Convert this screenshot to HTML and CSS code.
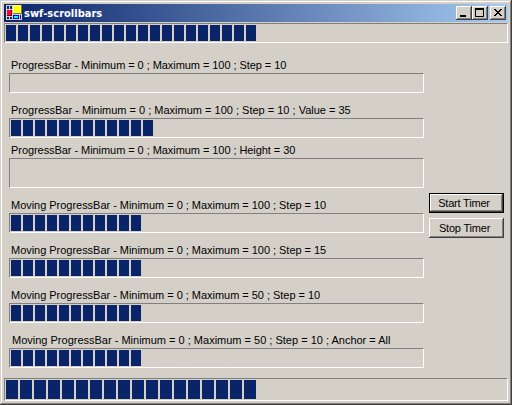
FILE: index.html
```html
<!DOCTYPE html>
<html lang="en">
<head>
<meta charset="utf-8">
<title>swf-scrollbars</title>
<link rel="stylesheet" href="styles.css">
</head>
<body>
<div class="window">
  <header class="titlebar">
    <svg class="app-icon" width="16" height="16" viewBox="0 0 16 16" shape-rendering="crispEdges">
      <path fill="#d4d0c8" d="M0 0h16v15H0z"/>
      <path fill="#0a246a" d="M1 1h2v3H1zM4 1h2v3H4zM1 12h2v2H1zM4 12h2v2H4zM14 10h1v4h-1z"/>
      <path fill="#800000" d="M1 5h5v6H1z"/><path fill="#ff0040" d="M1 5h4v5H1z"/>
      <path fill="#808000" d="M7 0h9v9H7z"/><path fill="#ffff80" d="M7 0h8v8H7z"/><path fill="#ffff00" d="M8 1h6v6H8z"/>
      <path fill="#0000ff" d="M7 10h6v4H7z"/><path fill="#00ffff" d="M8 11h4v2H8z"/>
    </svg>
    <h1 class="title"><span class="title-text">swf-scrollbars</span></h1>
    <div class="controls">
      <button class="control" aria-label="Minimize"><svg width="16" height="14" shape-rendering="crispEdges"><path d="M4 9h6v2H4z"/></svg></button>
      <button class="control" aria-label="Maximize"><svg width="16" height="14" shape-rendering="crispEdges"><path fill-rule="evenodd" d="M3 2h9v9H3zM4 4v6h7V4z"/></svg></button>
      <button class="control close" aria-label="Close"><svg width="16" height="14" shape-rendering="crispEdges"><path d="M4 3h2v1H4zM10 3h2v1h-2zM5 4h2v1H5zM9 4h2v1H9zM6 5h4v1H6zM7 6h2v1H7zM6 7h4v1H6zM5 8h2v1H5zM9 8h2v1H9zM4 9h2v1H4zM10 9h2v1h-2z"/></svg></button>
    </div>
  </header>
  <div class="bar"><div class="fill" style="width:250px"></div></div>
  <main class="content">
    <div class="fields">
      <div class="field"><label><span class="tight">ProgressBar - Minimum = 0 ; Maximum = 100 ; Step = 10</span></label><div class="bar"></div></div>
      <div class="field"><label>ProgressBar - Minimum = 0 ; Maximum = 100 ; Step = 10 ; Value = 35</label><div class="bar"><div class="fill" style="width:142px"></div></div></div>
      <div class="field close-up"><label><span class="tight">ProgressBar - Minimum = 0 ; Maximum = 100 ; Height = 30</span></label><div class="bar tall"></div></div>
      <div class="field"><label><span class="snug">Moving ProgressBar - Minimum = 0 ; Maximum = 100 ; Step = 10</span></label><div class="bar"><div class="fill" style="width:130px"></div></div></div>
      <div class="field"><label><span class="snug">Moving ProgressBar - Minimum = 0 ; Maximum = 100 ; Step = 15</span></label><div class="bar"><div class="fill" style="width:130px"></div></div></div>
      <div class="field"><label><span class="snug">Moving ProgressBar - Minimum = 0 ; Maximum = 50 ; Step = 10</span></label><div class="bar"><div class="fill" style="width:130px"></div></div></div>
      <div class="field"><label class="indent">Moving ProgressBar - Minimum = 0 ; Maximum = 50 ; Step = 10 ; Anchor = All</label><div class="bar"><div class="fill" style="width:130px"></div></div></div>
    </div>
    <div class="actions">
      <button class="btn default">Start Timer</button>
      <button class="btn">Stop Timer</button>
    </div>
  </main>
  <div class="bar bottom"><div class="fill wide" style="width:250px"></div></div>
</div>
</body>
</html>
```
FILE: styles.css
```css
* { box-sizing: border-box; }
body { margin: 0; overflow: hidden; }
.window {
  width: 512px;
  height: 405px;
  padding: 4px;
  display: flex;
  flex-direction: column;
  background: #d4d0c8;
  color: #000;
  font: 11px/15px "Liberation Sans", Arial, sans-serif;
  box-shadow: inset -1px -1px #404040, inset 1px 1px #d4d0c8, inset -2px -2px #808080, inset 2px 2px #fff;
}
.titlebar {
  height: 18px;
  margin-bottom: 1px;
  flex: none;
  display: flex;
  align-items: flex-start;
  padding: 1px 2px;
  background: linear-gradient(90deg, #0a246a, #a6caf0);
}
.app-icon { flex: none; }
.title { flex: 1; margin: 0 0 0 2px; color: #fff; font: bold 11px/18px "DejaVu Sans Condensed", "Open Sans", sans-serif; white-space: nowrap; }
.title-text { letter-spacing: 0.02px; }
.controls { display: flex; padding-top: 1px; }
.control {
  width: 16px;
  height: 14px;
  padding: 0;
  border: 0;
  background: #d4d0c8;
  box-shadow: inset -1px -1px #404040, inset 1px 1px #fff, inset -2px -2px #808080;
}
.control svg { display: block; }
.control.close { margin-left: 2px; }
.bar {
  height: 20px;
  flex: none;
  padding: 1px;
  border: 1px solid;
  border-color: #808080 #fff #fff #808080;
}
.bar.tall { height: 30px; }
.bar.bottom { height: 23px; }
.fill { height: 16px; background: repeating-linear-gradient(90deg, #0a246a 0 10px, transparent 10px 12px); }
.fill.wide { height: 19px; background: repeating-linear-gradient(90deg, #0a246a 0 12px, transparent 12px 14px); }
.content { height: 335px; flex: none; display: flex; padding: 15px 4px 10px 5px; }
.fields { width: 415px; display: flex; flex-direction: column; gap: 10px; }
.close-up { margin-top: -5px; }
.field label { display: block; height: 15px; padding-left: 2px; white-space: nowrap; }
.field label.indent { padding-left: 3px; }
.tight { letter-spacing: -0.06px; }
.snug { letter-spacing: -0.03px; }
.actions { margin: 135px 0 0 5px; display: flex; flex-direction: column; gap: 5px; }
.btn {
  width: 75px;
  height: 20px;
  padding: 0 4px 0 0;
  border: 0;
  background: #d4d0c8;
  color: #000;
  font: 11px/20px "Liberation Sans", Arial, sans-serif;
  letter-spacing: -0.2px;
  white-space: nowrap;
  box-shadow: inset -1px -1px #404040, inset 1px 1px #fff, inset -2px -2px #808080;
}
.btn.default {
  padding-right: 5px;
  border: 1px solid #000;
  line-height: 18px;
}
```
